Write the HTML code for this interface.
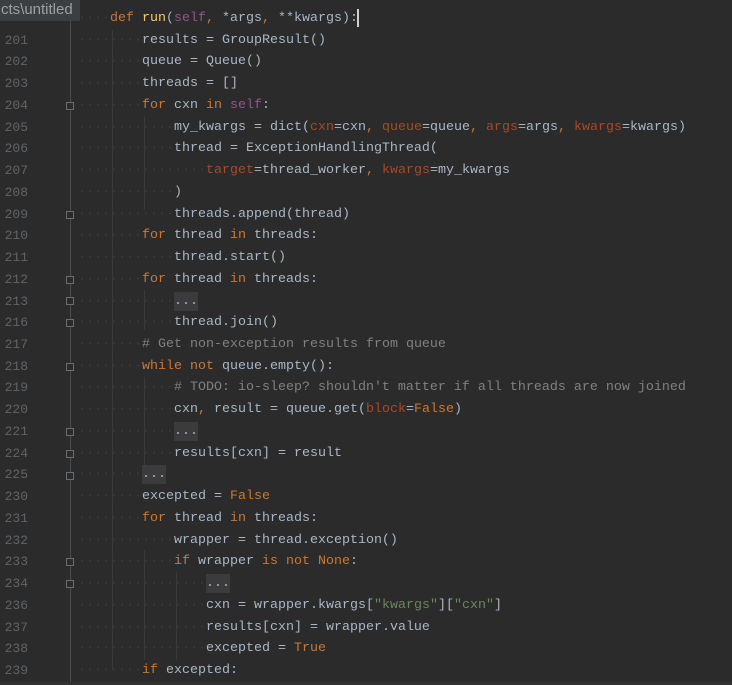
<!DOCTYPE html>
<html><head><meta charset="utf-8"><style>
html,body{margin:0;padding:0;}
body{width:732px;height:685px;background:#2b2b2b;position:relative;overflow:hidden;font-family:"Liberation Mono",monospace;}
#tab{position:absolute;left:0;top:0;width:79px;height:21px;background:#3c3f41;color:#9da0a3;font-family:"Liberation Sans",sans-serif;font-size:15px;line-height:20px;padding-left:1px;overflow:hidden;white-space:nowrap;}
#nums{position:absolute;left:0;top:8px;width:28px;text-align:right;color:#606366;font-size:13px;line-height:21.73px;}
#code{position:absolute;left:78px;top:8px;color:#a9b7c6;font-size:13.33px;line-height:21.73px;white-space:pre;}
.d{color:#3a3c3e}.k{color:#cc7832}.s{color:#94558d}.f{color:#ffc66d}.p{color:#aa4926}.c{color:#808080}.g{color:#6a8759}
.e{background:#3b3b3b;padding:2px 0}
#fl{position:absolute;left:70px;top:20px;width:1px;height:665px;background:#4a4d50;}
.m{position:absolute;left:66px;width:8px;height:8px;border:1px solid #6a6d70;background:#2b2b2b;box-sizing:border-box;}
.g1{position:absolute;width:1px;background:#3a3a3a;}
#cur{position:absolute;left:357px;top:9px;width:2px;height:18px;background:#d0d0d0;}
#bot{position:absolute;left:0;top:682px;width:732px;height:3px;background:#323232;}
</style></head><body>
<div id="tab">cts\untitled</div>
<div id="fl"></div>
<div class="g1" style="left:112px;top:30px;height:640px"></div>
<div class="g1" style="left:144px;top:117px;height:92px"></div>
<div class="g1" style="left:144px;top:290px;height:40px"></div>
<div class="g1" style="left:144px;top:377px;height:90px"></div>
<div class="g1" style="left:144px;top:550px;height:110px"></div>
<div class="g1" style="left:176px;top:572px;height:88px"></div>
<div class="m" style="top:102px"></div>
<div class="m" style="top:211px"></div>
<div class="m" style="top:276px"></div>
<div class="m" style="top:297px"></div>
<div class="m" style="top:319px"></div>
<div class="m" style="top:363px"></div>
<div class="m" style="top:428px"></div>
<div class="m" style="top:450px"></div>
<div class="m" style="top:472px"></div>
<div class="m" style="top:558px"></div>
<div class="m" style="top:580px"></div>
<div id="cur"></div>
<div id="nums"><br>201<br>202<br>203<br>204<br>205<br>206<br>207<br>208<br>209<br>210<br>211<br>212<br>213<br>216<br>217<br>218<br>219<br>220<br>221<br>224<br>225<br>230<br>231<br>232<br>233<br>234<br>236<br>237<br>238<br>239</div>
<div id="code"><span class="d">····</span><span class="k">def </span><span class="f">run</span>(<span class="s">self</span><span class="k">, </span>*args<span class="k">, </span>**kwargs):
<span class="d">········</span>results = GroupResult()
<span class="d">········</span>queue = Queue()
<span class="d">········</span>threads = []
<span class="d">········</span><span class="k">for </span>cxn <span class="k">in </span><span class="s">self</span>:
<span class="d">············</span>my_kwargs = dict(<span class="p">cxn</span>=cxn<span class="k">, </span><span class="p">queue</span>=queue<span class="k">, </span><span class="p">args</span>=args<span class="k">, </span><span class="p">kwargs</span>=kwargs)
<span class="d">············</span>thread = ExceptionHandlingThread(
<span class="d">················</span><span class="p">target</span>=thread_worker<span class="k">, </span><span class="p">kwargs</span>=my_kwargs
<span class="d">············</span>)
<span class="d">············</span>threads.append(thread)
<span class="d">········</span><span class="k">for </span>thread <span class="k">in </span>threads:
<span class="d">············</span>thread.start()
<span class="d">········</span><span class="k">for </span>thread <span class="k">in </span>threads:
<span class="d">············</span><span class="e">...</span>
<span class="d">············</span>thread.join()
<span class="d">········</span><span class="c"># Get non-exception results from queue</span>
<span class="d">········</span><span class="k">while not </span>queue.empty():
<span class="d">············</span><span class="c"># TODO: io-sleep? shouldn't matter if all threads are now joined</span>
<span class="d">············</span>cxn<span class="k">, </span>result = queue.get(<span class="p">block</span>=<span class="k">False</span>)
<span class="d">············</span><span class="e">...</span>
<span class="d">············</span>results[cxn] = result
<span class="d">········</span><span class="e">...</span>
<span class="d">········</span>excepted = <span class="k">False</span>
<span class="d">········</span><span class="k">for </span>thread <span class="k">in </span>threads:
<span class="d">············</span>wrapper = thread.exception()
<span class="d">············</span><span class="k">if </span>wrapper <span class="k">is not None</span>:
<span class="d">················</span><span class="e">...</span>
<span class="d">················</span>cxn = wrapper.kwargs[<span class="g">"kwargs"</span>][<span class="g">"cxn"</span>]
<span class="d">················</span>results[cxn] = wrapper.value
<span class="d">················</span>excepted = <span class="k">True</span>
<span class="d">········</span><span class="k">if </span>excepted:</div>
<div id="bot"></div>
</body></html>
